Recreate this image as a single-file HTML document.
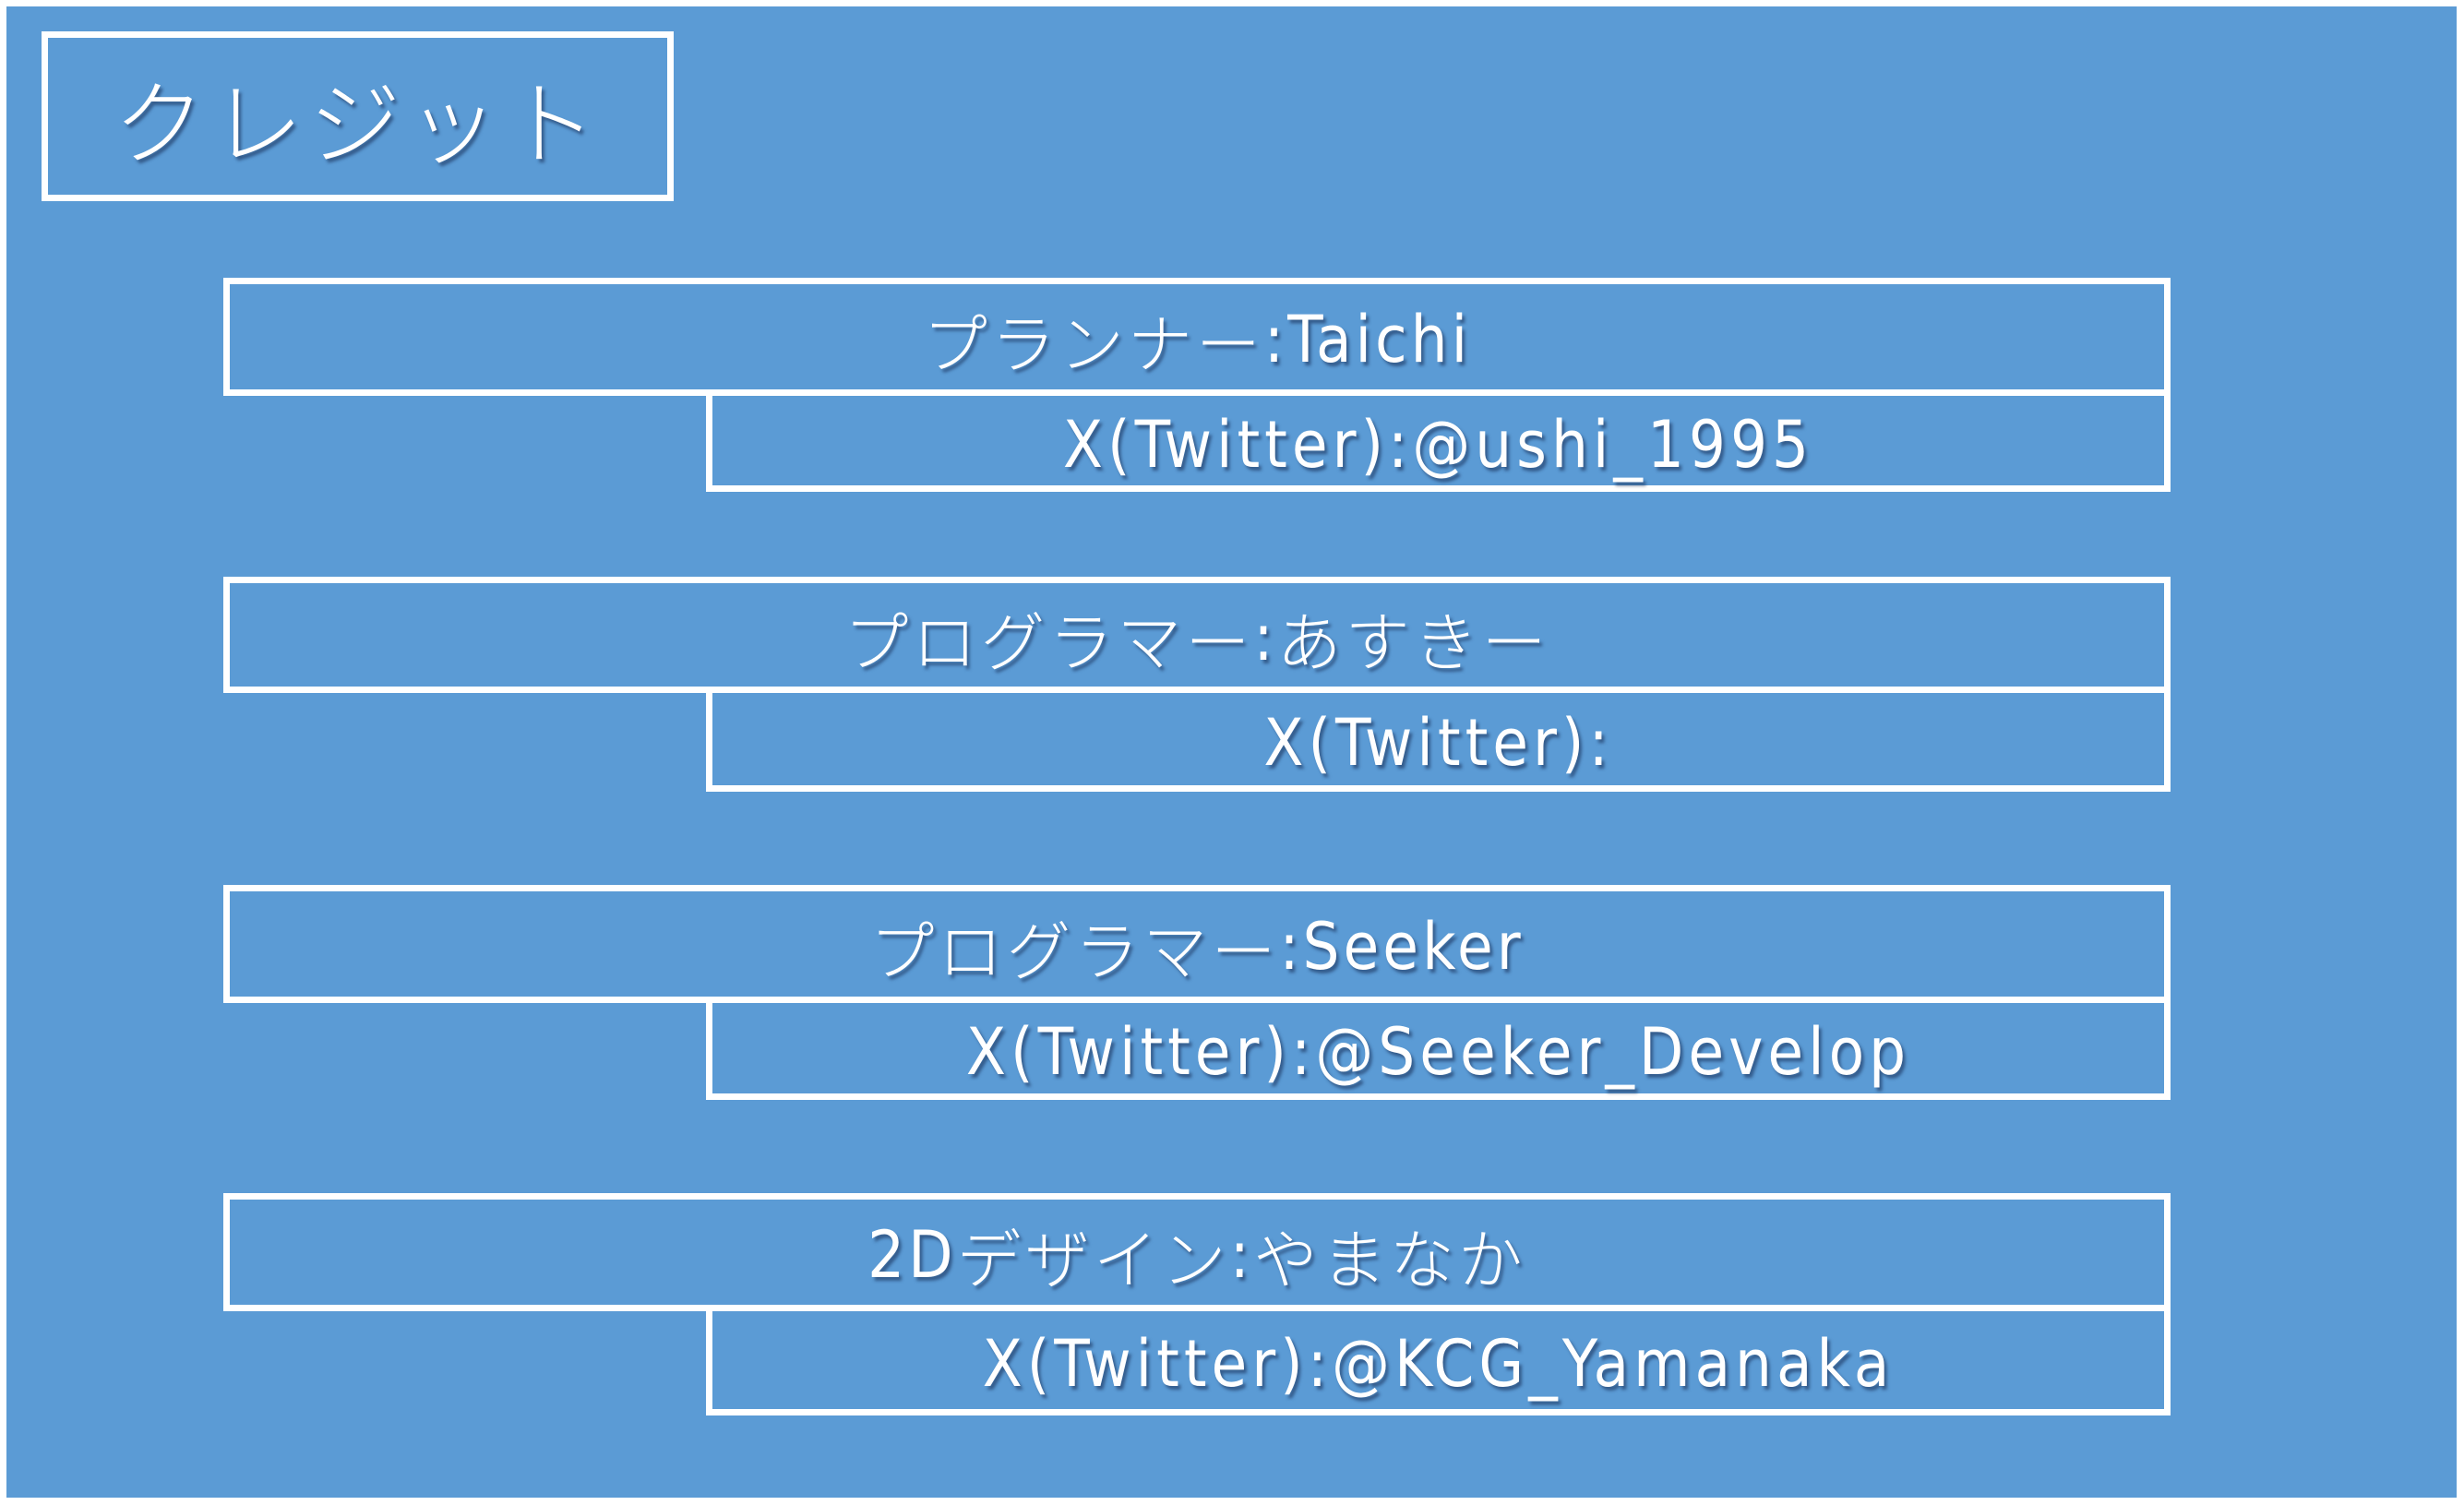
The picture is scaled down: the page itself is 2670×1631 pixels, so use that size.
<!DOCTYPE html>
<html><head><meta charset="utf-8"><style>
html,body{margin:0;padding:0;width:2670px;height:1631px;background:#fff;overflow:hidden}
.bg{position:absolute;left:7px;top:7px;width:2655px;height:1616px;background:#5b9bd5}
.box{position:absolute;box-sizing:border-box;border:7px solid #fff;display:flex;align-items:center;justify-content:center;color:#fff;
font-family:"Liberation Sans Narrow","DejaVu Sans Condensed","Liberation Sans","Noto Sans CJK JP",sans-serif;
text-shadow:3px 4px 3px rgba(20,40,80,0.55);white-space:nowrap}
.t{left:45px;top:34px;width:685px;height:184px;font-family:"Noto Sans CJK JP",sans-serif;font-size:100px;letter-spacing:6px;font-weight:300}
.a{left:242px;width:2110px;height:128px;font-size:70px;letter-spacing:4px;padding-top:6px}
.b{left:765px;width:1587px;height:114px;font-size:70px;letter-spacing:5px;padding-top:8px}
.j{font-family:"Noto Sans CJK JP",sans-serif;font-weight:300}
</style></head><body>
<div class="bg"></div>
<div class="box t">クレジット</div>
<div class="box a" style="top:301px"><span class="j">プランナー</span>:Taichi</div>
<div class="box b" style="top:422px;height:111px">X(Twitter):@ushi_1995</div>
<div class="box a" style="top:625px;height:126px"><span class="j">プログラマー</span>:<span class="j">あすきー</span></div>
<div class="box b" style="top:744px">X(Twitter):</div>
<div class="box a" style="top:959px"><span class="j">プログラマー</span>:Seeker</div>
<div class="box b" style="top:1080px;height:112px">X(Twitter):@Seeker_Develop</div>
<div class="box a" style="top:1293px">2D<span class="j">デザイン</span>:<span class="j">やまなか</span></div>
<div class="box b" style="top:1414px;height:120px">X(Twitter):@KCG_Yamanaka</div>
</body></html>
